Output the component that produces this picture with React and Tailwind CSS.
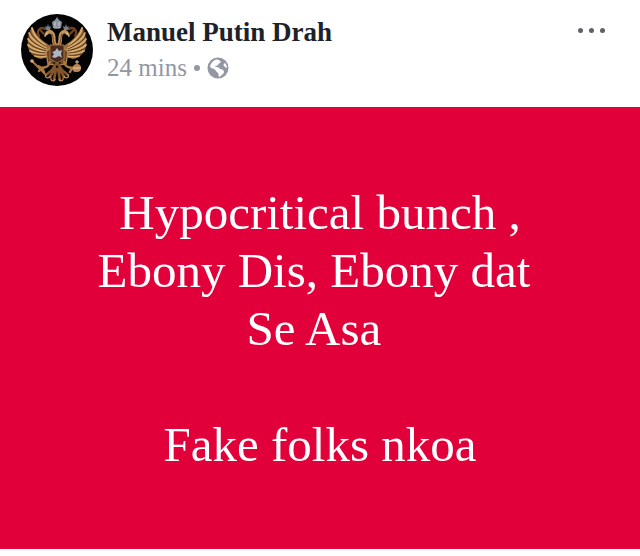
const FONT = "font-['Liberation_Serif',serif]"

const lines = [
  'Hypocritical bunch ,',
  'Ebony Dis, Ebony dat\u00a0',
  'Se Asa\u00a0',
  '\u00a0',
  'Fake folks nkoa',
]

// one half of the eagle, mirrored for the other side
function EagleHalf() {
  return (
    <g fill="none" strokeLinecap="round" strokeLinejoin="round">
      {/* wing */}
      <path d="M11 13 C8 18 6 25 7 33 C9 40 14 44 20 45 L30 42 L31 33 L22 27 C17 23 14 18 11 13 Z" fill="#9a6c3a" />
      <g stroke="#d8ab6e" strokeWidth="1.8">
        <path d="M11 14 C12 20 16 25 24 31" />
        <path d="M8 19 C10 25 16 29 25 34" />
        <path d="M7 25 C10 30 16 33 26 36" />
        <path d="M7 31 C11 35 17 37 26 38" />
        <path d="M9 37 C13 39 18 40 26 40" />
        <path d="M14 42 C18 43 22 43 27 42" />
      </g>
      <g stroke="#4a2e16" strokeWidth="0.8">
        <path d="M9 17 C11 23 16 27 24 32" />
        <path d="M7 22 C10 28 16 31 25 35" />
        <path d="M7 28 C11 33 17 35 26 37" />
        <path d="M8 34 C12 37 18 39 26 39" />
        <path d="M11 40 C15 41 20 42 26 41" />
      </g>
      {/* curl above the wing */}
      <path d="M18 22 C15 17 19 12 24 15 M19 16 L23 20" stroke="#6e4324" strokeWidth="2.2" />
      {/* neck, head, beak */}
      <path d="M35 32 C31 28 34 24 32 20 C30 17 28 17 26 19" stroke="#c1935a" strokeWidth="3.6" />
      <path d="M34 31 C31 27 33 23 31 20" stroke="#5b381c" strokeWidth="0.8" />
      <path d="M26 19 L24 22" stroke="#e0b77e" strokeWidth="1.6" />
      {/* small crown */}
      <path d="M25 16 L24 12 L26 13 L27 10 L28 13 L30 12 L29 16 Z" fill="#777f8b" />
      {/* body and leg */}
      <path d="M30 33 L25 38 L27 50 L33 51" fill="#704722" stroke="#b98b54" strokeWidth="1.2" />
      <path d="M29 48 C27 54 24 53 21 54 L17 52 M21 54 L18 57 M21 54 L23 58" stroke="#a97a45" strokeWidth="2.4" />
      {/* tail */}
      <path d="M35 50 L31 56 L25 61 M34 54 L29 63 M35 55 L33 66" stroke="#80542d" strokeWidth="2.6" />
      <path d="M25 61 C23 64 28 65 29 62 M30 64 C29 67 34 68 34 65" stroke="#c1935a" strokeWidth="1.2" />
    </g>
  )
}

function Avatar() {
  return (
    <svg viewBox="0 0 72 72" className="size-[72px] shrink-0" role="img" aria-label="Manuel Putin Drah">
      <circle cx="36" cy="36" r="36" fill="#050404" />
      <EagleHalf />
      <g transform="translate(72 0) scale(-1 1)">
        <EagleHalf />
      </g>
      {/* big crown */}
      <path d="M32 14 L31 8 L34 6 L36 3 L38 6 L41 8 L40 14 Z" fill="#8b919c" />
      <path d="M34 12 V8 M38 12 V8 M33 14 H39" stroke="#d4d7dc" strokeWidth="0.9" />
      {/* shield with rider */}
      <path d="M29 31 H43 V45 L36 49 L29 45 Z" fill="#4d2b1c" stroke="#a47643" strokeWidth="1" />
      <path d="M31 38 L34 37 L36 34 L38 37 L41 36 L40 40 L41 44 L38 42 L34 44 L31 43 L33 40 Z" fill="#aab6c3" />
      {/* scepter and orb */}
      <path d="M11 47 L24 60" stroke="#a97a45" strokeWidth="1.8" strokeLinecap="round" />
      <circle cx="11" cy="47" r="1.8" fill="#d8ab6e" />
      <circle cx="56" cy="54" r="4" fill="#b98655" />
      <path d="M56 46 V50 M54 48 H58 M52 54 H60" stroke="#e5c9a5" strokeWidth="1" />
    </svg>
  )
}

function Globe() {
  return (
    <svg viewBox="0 0 22 22" className="size-[22px]" role="img" aria-label="Public">
      <circle cx="11" cy="11" r="10.5" fill="#9197a3" />
      <path d="M8 3 C10 2 13 3 14 5 C13 6 12 6 11 8 C10 9 8 9 8 10 C10 10 12 10 13 12 C15 12 17 13 17 15 C17 17 14 18 13 20 C11 20 12 17 11 16 C9 15 9 13 7 12 C5 11 3 11 3 9 C4 6 6 4 8 3 Z" fill="#fff" />
      <path d="M18 6 C16 7 16 9 18 10 L20 11 C20 9 19 7 18 6 Z" fill="#fff" />
    </svg>
  )
}

function App() {
  return (
    <article className={`min-h-screen bg-white ${FONT}`}>
      <header className="flex items-start px-[21px] pt-3.5 pb-[21px]">
        <Avatar />
        <div className="ml-3.5 flex-1">
          <h1 className="text-[27px] leading-9 font-bold text-[#1d2129]">Manuel Putin Drah</h1>
          <div className="flex items-center gap-[7px] text-[25px] leading-9 text-[#9197a3]">
            <span>24 mins</span>
            <span className="size-1.5 rounded-full bg-[#9197a3]" />
            <Globe />
          </div>
        </div>
        <button type="button" aria-label="More options" className="mt-2.5 mr-3.5 flex gap-1.5 py-1">
          <span className="size-[5px] rounded-full bg-[#606167]" />
          <span className="size-[5px] rounded-full bg-[#606167]" />
          <span className="size-[5px] rounded-full bg-[#606167]" />
        </button>
      </header>
      <div className="bg-[#e2003b] pt-[77px] pb-[75px] text-center text-[49px] leading-[58px] text-white">
        {lines.map((line, i) => (
          <p key={i}>{line}</p>
        ))}
      </div>
    </article>
  )
}

export default App
